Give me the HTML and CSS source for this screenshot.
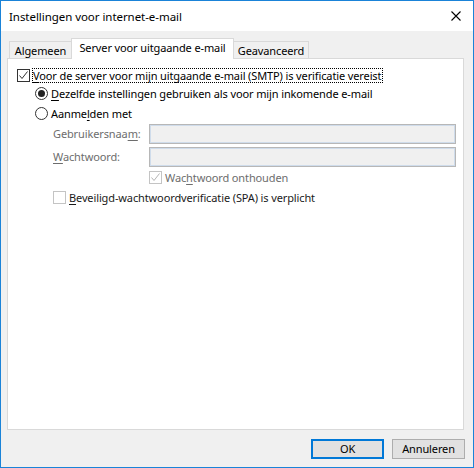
FILE: index.html
```html
<!DOCTYPE html>
<html>
<head>
<meta charset="utf-8">
<link rel="stylesheet" href="styles.css">
</head>
<body>
<div class="window">
  <div class="titlebar">
    <span class="title">Instellingen voor internet-e-mail</span>
    <svg class="close" width="10" height="10" viewBox="0 0 10 10"><path d="M0.5 0.5 L9.5 9.5 M9.5 0.5 L0.5 9.5" stroke="#000" stroke-width="1.1" fill="none"/></svg>
  </div>
  <div class="body">
    <div class="tabs">
      <div class="tab tab-first">Algemeen</div>
      <div class="tab active">Server voor uitgaande e-mail</div>
      <div class="tab tab-last">Geavanceerd</div>
    </div>
    <div class="panel">
      <div class="row">
        <span class="cb"><svg viewBox="0 0 11 11" width="11" height="11"><path d="M1.5 5.5 L4 8.5 L9.5 1.5" stroke="#333" stroke-width="1" fill="none"/></svg></span>
        <span class="focus"><u>V</u>oor de server voor mijn uitgaande e-mail (SMTP) is verificatie vereist</span>
      </div>
      <div class="group">
        <div class="row r-radio1">
          <span class="radio on"></span>
          <span class="lbl"><u>D</u>ezelfde instellingen gebruiken als voor mijn inkomende e-mail</span>
        </div>
        <div class="row r-radio2">
          <span class="radio"></span>
          <span class="lbl">Aanme<u>l</u>den met</span>
        </div>
        <div class="fields">
          <span class="flabel">Gebruikersnaa<u>m</u>:</span>
          <div class="input"></div>
          <span class="flabel"><u>W</u>achtwoord:</span>
          <div class="input"></div>
          <div class="row r-remember">
            <span class="cb dis"><svg viewBox="0 0 11 11" width="11" height="11"><path d="M1.5 5.5 L4 8.5 L9.5 1.5" stroke="#b5b5b5" stroke-width="1" fill="none"/></svg></span>
            <span class="lbl gray">Wac<u>h</u>twoord onthouden</span>
          </div>
        </div>
        <div class="row r-spa">
          <span class="cb dis"></span>
          <span class="lbl dark"><u>B</u>eveiligd-wachtwoordverificatie (SPA) is verplicht</span>
        </div>
      </div>
    </div>
    <div class="buttons">
      <div class="btn default">OK</div>
      <div class="btn">Annuleren</div>
    </div>
  </div>
</div>
</body>
</html>
```

FILE: styles.css
```css
* { box-sizing: border-box; }
html, body { margin: 0; padding: 0; background: #fff; }
body {
  font-family: "Noto Sans", "Open Sans", sans-serif;
  font-size: 11px;
  letter-spacing: -0.12px;
  color: #000;
}
u { text-decoration: underline; text-underline-offset: 2px; text-decoration-thickness: 1px; }

.window {
  width: 474px;
  height: 468px;
  border: 1px solid #1a83d8;
  display: flex;
  flex-direction: column;
  background: #f0f0f0;
}

.titlebar {
  height: 30px;
  flex: none;
  background: #fff;
  display: flex;
  align-items: center;
  justify-content: space-between;
  padding: 0 12px 0 8px;
}
.title { font-size: 11.5px; letter-spacing: -0.05px; color: #000; }
.close { display: block; }

.body {
  flex: 1;
  display: flex;
  flex-direction: column;
  padding-left: 6px;
}

.tabs {
  display: flex;
  align-items: flex-end;
  margin-top: 7px;
  padding-left: 2px;
  height: 20px;
}
.tab {
  height: 17px;
  border: 1px solid #d9d9d9;
  border-bottom: none;
  background: #f0f0f0;
  display: flex;
  align-items: center;
  justify-content: center;
  line-height: 14px;
  padding-top: 1px;
  white-space: nowrap;
}
.tab-first { width: 62px; border-right: none; }
.tab-last { width: 75px; border-left: none; }
.tab.active {
  width: 163px;
  height: 21px;
  margin-bottom: -1px;
  background: #fff;
  position: relative;
  z-index: 1;
  padding-top: 0;
  padding-bottom: 3px;
}

.panel {
  width: 457px;
  height: 372px;
  background: #fff;
  border: 1px solid #d9d9d9;
  padding: 10px 0 0 9px;
}

.row {
  display: flex;
  align-items: center;
  height: 13px;
  white-space: nowrap;
}
.cb {
  width: 13px;
  height: 13px;
  border: 1px solid #333;
  background: #fff;
  flex: none;
  display: flex;
  align-items: center;
  justify-content: center;
}
.cb svg { display: block; }
.cb.dis { border-color: #c4c4c4; }
.focus {
  margin-left: 2px;
  border: 1px dotted #000;
  line-height: 13px;
  padding: 0 1px 0 0;
}
.group { margin-left: 18px; }
.r-radio1 { margin-top: 5px; }
.r-radio2 { margin-top: 7px; }
.radio {
  width: 13px;
  height: 13px;
  border: 1px solid #333;
  border-radius: 50%;
  background: #fff;
  flex: none;
  display: flex;
  align-items: center;
  justify-content: center;
}
.radio.on::after {
  content: "";
  width: 7px;
  height: 7px;
  border-radius: 50%;
  background: #222;
}
.lbl { margin-left: 3px; line-height: 13px; }
.gray { color: #6d6d6d; }
.dark { color: #1a1a1a; }

.fields {
  display: grid;
  grid-template-columns: 96px 307px;
  row-gap: 3px;
  margin-top: 4px;
  margin-left: 18px;
  align-items: center;
}
.flabel { color: #6d6d6d; line-height: 14px; }
.input {
  height: 20px;
  border: 1px solid #b7b7b7;
  box-shadow: inset 0 0 0 1px #cfdceb;
  background: #f0f0f0;
}
.r-remember { grid-column: 2; margin-top: 1px; }
.r-spa { margin-top: 7px; margin-left: 18px; }

.buttons {
  display: flex;
  justify-content: flex-end;
  gap: 8px;
  margin-top: 9px;
  padding-right: 8px;
}
.btn {
  width: 73px;
  height: 20px;
  border: 1px solid #adadad;
  background: #e1e1e1;
  display: flex;
  align-items: center;
  justify-content: center;
  line-height: 14px;
}
.btn.default { border: 2px solid #0078d7; }
```
